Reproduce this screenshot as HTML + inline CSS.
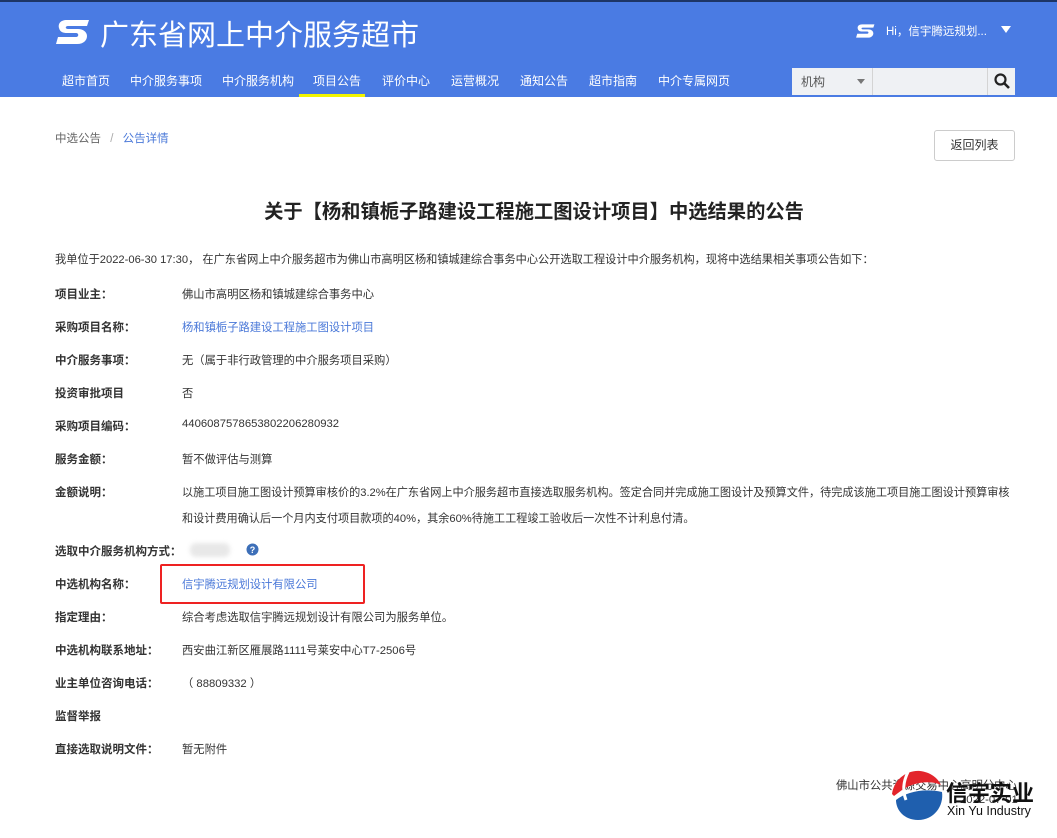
<!DOCTYPE html>
<html><head><meta charset="utf-8">
<style>
*{margin:0;padding:0;box-sizing:border-box}
body{width:1057px;height:838px;background:#fff;font-family:"Liberation Sans","Noto Sans CJK SC",sans-serif;position:relative;overflow:hidden;color:#333}
.hdr{position:absolute;left:0;top:0;width:1057px;height:97px;background:#4a7be3;border-top:2px solid #1d3566}
.a{position:absolute;white-space:nowrap}
.nav{top:72px;font-size:12px;color:#fff}
.lbl{position:absolute;left:55px;font-size:11.5px;font-weight:bold;color:#333;white-space:nowrap}
.val{position:absolute;left:182px;font-size:11.3px;color:#333;white-space:nowrap}
.blue{color:#4a78d8}
</style></head><body>
<div class="hdr"></div>
<svg class="a" style="left:54px;top:18px" width="36" height="28" viewBox="0 0 36 28"><path d="M35 2H13C6 2 4 6 5 10c1 4 4 5 8 5h9c3 0 3 4 0 4H4l-2 7h21c7 0 10-4 10-8s-4-7-9-7H14c-3 0-3-3 0-3h19z" fill="#fff"/></svg>
<div class="a" style="left:100px;top:12px;font-size:29px;color:#fff">广东省网上中介服务超市</div>
<svg class="a" style="left:855px;top:23px" width="20" height="16" viewBox="0 0 36 28"><path d="M35 2H13C6 2 4 6 5 10c1 4 4 5 8 5h9c3 0 3 4 0 4H4l-2 7h21c7 0 10-4 10-8s-4-7-9-7H14c-3 0-3-3 0-3h19z" fill="#fff"/></svg>
<div class="a" style="left:886px;top:23px;font-size:11.5px;color:#fff">Hi，信宇腾远规划...</div>
<div class="a" style="left:1001px;top:26px;width:0;height:0;border-left:5px solid transparent;border-right:5px solid transparent;border-top:7px solid #fff"></div>
<div class="a nav" style="left:62px">超市首页</div>
<div class="a nav" style="left:130px">中介服务事项</div>
<div class="a nav" style="left:222px">中介服务机构</div>
<div class="a nav" style="left:313px">项目公告</div>
<div class="a" style="left:299px;top:94px;width:66px;height:3px;background:#f2f500"></div>
<div class="a nav" style="left:382px">评价中心</div>
<div class="a nav" style="left:451px">运营概况</div>
<div class="a nav" style="left:520px">通知公告</div>
<div class="a nav" style="left:589px">超市指南</div>
<div class="a nav" style="left:658px">中介专属网页</div>
<div class="a" style="left:792px;top:68px;width:223px;height:27px;background:#eff1f4"></div>
<div class="a" style="left:872px;top:68px;width:1px;height:27px;background:#d4d4d4"></div>
<div class="a" style="left:987px;top:68px;width:1px;height:27px;background:#d4d4d4"></div>
<div class="a" style="left:801px;top:73px;font-size:12px;color:#555">机构</div>
<div class="a" style="left:857px;top:79px;width:0;height:0;border-left:4px solid transparent;border-right:4px solid transparent;border-top:5px solid #777"></div>
<svg class="a" style="left:993px;top:72px" width="18" height="18" viewBox="0 0 18 18"><circle cx="7.5" cy="7.5" r="5" fill="none" stroke="#222" stroke-width="2.2"/><path d="M11 11l5 5" stroke="#222" stroke-width="2.6"/></svg>

<div class="a" style="left:55px;top:130px;font-size:11.5px;color:#666">中选公告 <span style="color:#aaa;margin:0 6px">/</span> <span class="blue">公告详情</span></div>
<div class="a" style="left:934px;top:130px;width:81px;height:31px;border:1px solid #ccc;border-radius:3px;font-size:12px;color:#333;text-align:center;line-height:29px">返回列表</div>
<div class="a" style="left:0;width:1057px;top:196px;text-align:center;font-size:19.3px;font-weight:bold;color:#222;padding-left:11px">关于【杨和镇栀子路建设工程施工图设计项目】中选结果的公告</div>
<div class="a" style="left:55px;top:251px;font-size:11.2px;color:#333">我单位于2022-06-30 17:30， 在广东省网上中介服务超市为佛山市高明区杨和镇城建综合事务中心公开选取工程设计中介服务机构，现将中选结果相关事项公告如下：</div>

<div class="lbl" style="top:286px">项目业主：</div><div class="val" style="top:286px">佛山市高明区杨和镇城建综合事务中心</div>
<div class="lbl" style="top:319px">采购项目名称：</div><div class="val blue" style="top:319px">杨和镇栀子路建设工程施工图设计项目</div>
<div class="lbl" style="top:352px">中介服务事项：</div><div class="val" style="top:352px">无（属于非行政管理的中介服务项目采购）</div>
<div class="lbl" style="top:385px">投资审批项目</div><div class="val" style="top:385px">否</div>
<div class="lbl" style="top:418px">采购项目编码：</div><div class="val" style="top:418px">4406087578653802206280932</div>
<div class="lbl" style="top:451px">服务金额：</div><div class="val" style="top:451px">暂不做评估与测算</div>
<div class="lbl" style="top:484px">金额说明：</div><div class="val" style="top:484px;font-size:11.15px">以施工项目施工图设计预算审核价的3.2%在广东省网上中介服务超市直接选取服务机构。签定合同并完成施工图设计及预算文件，待完成该施工项目施工图设计预算审核</div>
<div class="val" style="top:510px;font-size:11.15px">和设计费用确认后一个月内支付项目款项的40%，其余60%待施工工程竣工验收后一次性不计利息付清。</div>
<div class="lbl" style="top:543px">选取中介服务机构方式：</div>
<div class="a" style="left:190px;top:543px;width:40px;height:14px;background:#e8e8e8;border-radius:6px;filter:blur(2px)"></div>
<svg class="a" style="left:246px;top:543px" width="13" height="13" viewBox="0 0 13 13"><circle cx="6.5" cy="6.5" r="6" fill="#3d6fb8"/><text x="6.5" y="10" font-size="9" font-weight="bold" text-anchor="middle" fill="#fff" font-family="Liberation Sans">?</text></svg>
<div class="a" style="left:160px;top:564px;width:205px;height:40px;border:2px solid #ee2222;border-radius:2px"></div>
<div class="lbl" style="top:576px">中选机构名称：</div><div class="val blue" style="top:576px">信宇腾远规划设计有限公司</div>
<div class="lbl" style="top:609px">指定理由：</div><div class="val" style="top:609px">综合考虑选取信宇腾远规划设计有限公司为服务单位。</div>
<div class="lbl" style="top:642px">中选机构联系地址：</div><div class="val" style="top:642px">西安曲江新区雁展路1111号莱安中心T7-2506号</div>
<div class="lbl" style="top:675px">业主单位咨询电话：</div><div class="val" style="top:675px">（ 88809332 ）</div>
<div class="lbl" style="top:708px">监督举报</div>
<div class="lbl" style="top:741px">直接选取说明文件：</div><div class="val" style="top:741px">暂无附件</div>

<div class="a" style="left:836px;top:777px;font-size:11.3px;color:#333">佛山市公共资源交易中心高明分中心</div>
<div class="a" style="left:960px;top:794px;font-size:11.3px;color:#333">2022-07-01</div>
<svg class="a" style="left:890px;top:768px" width="56" height="56" viewBox="0 0 56 56"><path d="M2 26C4 12 16 2 30 3c10 1 18 7 21 14C40 12 24 14 12 22L4 28z" fill="#e3242b"/><path d="M6 32c10-8 28-12 46-8 2 14-8 28-24 28C14 52 6 42 6 32z" fill="#1f5fae"/><path d="M18 4c-4 8-6 18-2 28" stroke="#fff" stroke-width="3" fill="none"/></svg>
<div class="a" style="left:946px;top:776px;font-size:22px;font-weight:bold;color:#111">信宇实业</div>
<div class="a" style="left:947px;top:804px;font-size:12.5px;color:#111">Xin Yu Industry</div>
</body></html>
